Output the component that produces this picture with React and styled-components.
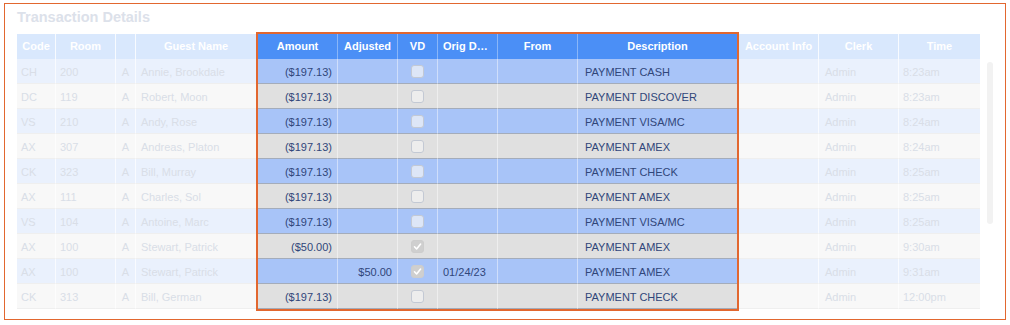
import React from "react"
import styled, { createGlobalStyle } from "styled-components"

const ORANGE = "#e2672f"

const GlobalStyle = createGlobalStyle`
  body {
    margin: 0;
    background: #fff;
    font-family: "Liberation Sans", Arial, sans-serif;
  }
`

const Frame = styled.section`
  box-sizing: border-box;
  width: 1002px;
  height: 317px;
  margin: 3px 0 0 4px;
  padding: 5px 0 0 12px;
  border: 1px solid ${ORANGE};
`

const Title = styled.h2`
  margin: 0 0 8px;
  font-size: 14.5px;
  line-height: 17px;
  font-weight: 700;
  color: #dce1ea;
`

const Table = styled.div`
  display: flex;
  align-items: flex-start;
`

const Group = styled.div`
  display: flex;
  flex-direction: column;
  margin: ${({ $focus }) => ($focus ? "0 2px" : "0")};
  outline: ${({ $focus }) => ($focus ? `2px solid ${ORANGE}` : "none")};
`

const Row = styled.div`
  display: flex;
  height: 25px;
`

const HeaderCell = styled.div`
  box-sizing: border-box;
  width: ${({ $w }) => $w}px;
  padding: 0 ${({ $pad }) => $pad}px;
  line-height: 25px;
  font-size: 11px;
  font-weight: 700;
  text-align: center;
  color: #fff;
  white-space: nowrap;
  overflow: hidden;
  text-overflow: ellipsis;
  background: ${({ $focus }) => ($focus ? "#4b8ff6" : "#d9e8fd")};
  border-right: 1px solid
    ${({ $focus }) => ($focus ? "rgba(255,255,255,0.35)" : "rgba(255,255,255,0.8)")};
  &:last-child {
    border-right: none;
  }
`

const rowBg = ({ $focus, $odd }) => {
  if ($focus) return $odd ? "#a8c4f8" : "#e0e0e0"
  return $odd ? "#eaf1fd" : "#f8f8f8"
}

const Cell = styled.div`
  box-sizing: border-box;
  display: flex;
  align-items: center;
  justify-content: ${({ $align }) =>
    $align === "right" ? "flex-end" : $align === "center" ? "center" : "flex-start"};
  width: ${({ $w }) => $w}px;
  padding: 1px ${({ $pad }) => $pad ?? 5}px 0;
  font-size: 11px;
  white-space: nowrap;
  overflow: hidden;
  color: ${({ $focus }) => ($focus ? "#30467a" : "#d9dee7")};
  background: ${rowBg};
  border-right: 1px solid
    ${({ $focus }) => ($focus ? "rgba(255,255,255,0.45)" : "rgba(255,255,255,0.7)")};
  border-bottom: 1px solid ${({ $focus }) => ($focus ? "#a4acba" : "#efefef")};
  &:last-child {
    border-right: none;
  }
`

const Box = styled.span`
  box-sizing: border-box;
  display: flex;
  align-items: center;
  justify-content: center;
  width: 13px;
  height: 13px;
  border-radius: 3px;
  border: 1px solid ${({ $checked }) => ($checked ? "#cdcdcd" : "#c3c9d4")};
  background: ${({ $checked, $odd }) =>
    $checked ? "#cfcfcf" : $odd ? "#dde6f7" : "#ededed"};
`

const ScrollTrack = styled.div`
  width: 6px;
  height: 162px;
  margin: 28px 0 0 7px;
  border-radius: 3px;
  background: #f2f2f2;
`

const Checkbox = ({ checked, odd }) => (
  <Box $checked={checked} $odd={odd}>
    {checked && (
      <svg width="9" height="9" viewBox="0 0 9 9">
        <polyline
          points="1.5,4.8 3.6,7 7.6,2"
          fill="none"
          stroke="#fff"
          strokeWidth="1.6"
          strokeLinecap="round"
          strokeLinejoin="round"
        />
      </svg>
    )}
  </Box>
)

const groups = [
  {
    focus: false,
    cols: [
      { key: "code", label: "Code", w: 39, pad: 4 },
      { key: "room", label: "Room", w: 60, pad: 4 },
      { key: "flag", label: "", w: 20, align: "center" },
      { key: "guest", label: "Guest Name", w: 120 },
    ],
  },
  {
    focus: true,
    cols: [
      { key: "amount", label: "Amount", w: 80, align: "right" },
      { key: "adjusted", label: "Adjusted", w: 60, align: "right" },
      { key: "vd", label: "VD", w: 40, align: "center" },
      { key: "orig", label: "Orig Date", w: 60, headPad: 5 },
      { key: "from", label: "From", w: 80 },
      { key: "desc", label: "Description", w: 159, pad: 7 },
    ],
  },
  {
    focus: false,
    cols: [
      { key: "account", label: "Account Info", w: 80 },
      { key: "clerk", label: "Clerk", w: 80, pad: 6 },
      { key: "time", label: "Time", w: 81, pad: 4 },
    ],
  },
]

const tx = (code, room, guest, amount, desc, time, extra = {}) => ({
  code,
  room,
  flag: "A",
  guest,
  amount,
  adjusted: "",
  vd: false,
  orig: "",
  from: "",
  desc,
  account: "",
  clerk: "Admin",
  time,
  ...extra,
})

const rows = [
  tx("CH", "200", "Annie, Brookdale", "($197.13)", "PAYMENT CASH", "8:23am"),
  tx("DC", "119", "Robert, Moon", "($197.13)", "PAYMENT DISCOVER", "8:23am"),
  tx("VS", "210", "Andy, Rose", "($197.13)", "PAYMENT VISA/MC", "8:24am"),
  tx("AX", "307", "Andreas, Platon", "($197.13)", "PAYMENT AMEX", "8:24am"),
  tx("CK", "323", "Bill, Murray", "($197.13)", "PAYMENT CHECK", "8:25am"),
  tx("AX", "111", "Charles, Sol", "($197.13)", "PAYMENT AMEX", "8:25am"),
  tx("VS", "104", "Antoine, Marc", "($197.13)", "PAYMENT VISA/MC", "8:25am"),
  tx("AX", "100", "Stewart, Patrick", "($50.00)", "PAYMENT AMEX", "9:30am", { vd: true }),
  tx("AX", "100", "Stewart, Patrick", "", "PAYMENT AMEX", "9:31am", {
    adjusted: "$50.00",
    vd: true,
    orig: "01/24/23",
  }),
  tx("CK", "313", "Bill, German", "($197.13)", "PAYMENT CHECK", "12:00pm"),
]

const App = () => {
  return (
    <>
      <GlobalStyle />
      <Frame>
        <Title>Transaction Details</Title>
        <Table>
          {groups.map((group, gi) => (
            <Group key={gi} $focus={group.focus}>
              <Row>
                {group.cols.map((col) => (
                  <HeaderCell
                    key={col.key}
                    $w={col.w}
                    $pad={col.headPad ?? 1}
                    $focus={group.focus}
                  >
                    {col.label}
                  </HeaderCell>
                ))}
              </Row>
              {rows.map((row, ri) => (
                <Row key={ri}>
                  {group.cols.map((col) => (
                    <Cell
                      key={col.key}
                      $w={col.w}
                      $pad={col.pad}
                      $align={col.align}
                      $focus={group.focus}
                      $odd={ri % 2 === 0}
                    >
                      {col.key === "vd" ? (
                        <Checkbox checked={row.vd} odd={ri % 2 === 0} />
                      ) : (
                        row[col.key]
                      )}
                    </Cell>
                  ))}
                </Row>
              ))}
            </Group>
          ))}
          <ScrollTrack />
        </Table>
      </Frame>
    </>
  )
}

export default App
